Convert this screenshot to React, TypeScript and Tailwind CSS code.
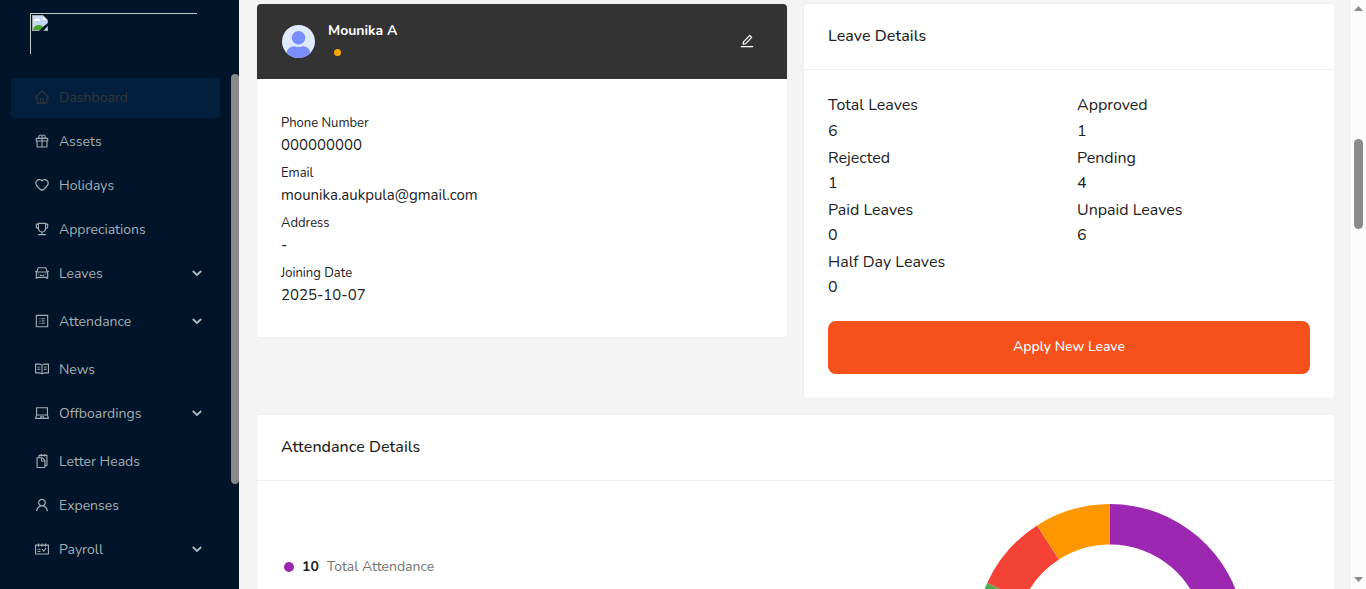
import type { ReactNode } from "react";
import {
  AiOutlineCar,
  AiOutlineEdit,
  AiOutlineGift,
  AiOutlineHeart,
  AiOutlineHome,
  AiOutlineLaptop,
  AiOutlineProfile,
  AiOutlineRead,
  AiOutlineSchedule,
  AiOutlineSnippets,
  AiOutlineTrophy,
  AiOutlineUser,
} from "react-icons/ai";

type MenuItem = {
  label: string;
  icon: ReactNode;
  active?: boolean;
  expandable?: boolean;
};

const menu: MenuItem[] = [
  { label: "Dashboard", icon: <AiOutlineHome />, active: true },
  { label: "Assets", icon: <AiOutlineGift /> },
  { label: "Holidays", icon: <AiOutlineHeart /> },
  { label: "Appreciations", icon: <AiOutlineTrophy /> },
  { label: "Leaves", icon: <AiOutlineCar />, expandable: true },
  { label: "Attendance", icon: <AiOutlineProfile />, expandable: true },
  { label: "News", icon: <AiOutlineRead /> },
  { label: "Offboardings", icon: <AiOutlineLaptop />, expandable: true },
  { label: "Letter Heads", icon: <AiOutlineSnippets /> },
  { label: "Expenses", icon: <AiOutlineUser /> },
  { label: "Payroll", icon: <AiOutlineSchedule />, expandable: true },
];

const contact = [
  { label: "Phone Number", value: "000000000" },
  { label: "Email", value: "mounika.aukpula@gmail.com" },
  { label: "Address", value: "-" },
  { label: "Joining Date", value: "2025-10-07" },
];

const leaves = [
  { label: "Total Leaves", value: "6" },
  { label: "Approved", value: "1" },
  { label: "Rejected", value: "1" },
  { label: "Pending", value: "4" },
  { label: "Paid Leaves", value: "0" },
  { label: "Unpaid Leaves", value: "6" },
  { label: "Half Day Leaves", value: "0" },
];

const slices = [
  { color: "#9c27b0", from: 0, to: 5 },
  { color: "#4caf50", from: 5, to: 9 },
  { color: "#f44336", from: 9, to: 10 },
  { color: "#ff9800", from: 10, to: 11 },
];

function BrokenLogo() {
  return (
    <div className="ml-[30px] mt-[13px] h-[41px] w-[167px] shrink-0 border-l border-t border-[#c4c6c8] pl-px pt-px">
      <svg width="16" height="16" viewBox="0 0 16 16">
        <path d="M0 0h11l5 5v11H0z" fill="#a9a9a9" />
        <path d="M1 1h10v4h4v10H1z" fill="#c4d7f5" />
        <path d="M2 6a1.500 1.500 0 0 1 1.500-2 2 2 0 0 1 3.500 0 1.500 1.500 0 0 1 1 2z" fill="#fff" />
        <path d="M1 15c0-3 3-5 6-5s5 2 6 5z" fill="#4ea82c" />
        <path d="M11 1l4 4h-4z" fill="#f4f4f4" />
        <path d="M16 8v3l-5 5H7l5-5z" fill="#001529" />
      </svg>
    </div>
  );
}

function Chevron() {
  return (
    <svg className="mb-0.5 ml-auto mr-[17px]" width="12" height="8" viewBox="0 0 12 8" fill="none">
      <path d="M1.800 2 6 5.900l4.200-3.900" stroke="#b3b9bf" strokeWidth="1.900" />
    </svg>
  );
}

function Sidebar() {
  return (
    <aside className="flex h-full w-[239px] shrink-0 flex-col bg-[#001529]">
      <BrokenLogo />
      <div className="flex min-h-0 grow pt-5">
        <nav className="mt-1 flex w-[231px] shrink-0 flex-col gap-1 pl-[11px] pr-[11px]">
          {menu.map((item) => (
            <div key={item.label} className={item.expandable ? "pb-1" : ""}>
              <div
                className={`flex h-10 items-center rounded pl-[23px] text-sm ${
                  item.active ? "bg-[#021f3d] text-[#333639]" : "text-[#a6adb4]"
                }`}
              >
                <span className="mb-0.5 mr-[9px] text-base">{item.icon}</span>
                <span className="whitespace-nowrap">{item.label}</span>
                {item.expandable && <Chevron />}
              </div>
            </div>
          ))}
        </nav>
        <div className="h-[410px] w-2 rounded bg-[#888]" />
      </div>
    </aside>
  );
}

function Avatar() {
  return (
    <svg width="33" height="33" viewBox="0 0 33 33">
      <defs>
        <clipPath id="avatar-disc">
          <circle cx="16.500" cy="16.500" r="16.500" />
        </clipPath>
      </defs>
      <g clipPath="url(#avatar-disc)">
        <rect width="33" height="33" fill="#e0eaff" />
        <circle cx="16.500" cy="12.800" r="6.800" fill="#7b8cff" />
        <path d="M4.500 33v-4c0-4 3-7.800 7.500-7.800 1.500 0 2.500.8 4.500.8s3-.8 4.500-.8c4.500 0 7.500 3.800 7.500 7.800v4z" fill="#7b8cff" />
      </g>
    </svg>
  );
}

function ProfileCard() {
  return (
    <section className="h-[334px] w-[532px] rounded border border-t-0 border-[#f0f0f0] bg-white">
      <header className="flex h-[75px] items-center rounded-t bg-[#333] pl-[25px] pr-8">
        <Avatar />
        <div className="ml-[13px] flex h-full flex-col pt-4">
          <h2 className="text-sm font-bold leading-[22px] text-white">Mounika A</h2>
          <span className="ml-[6px] mt-[7px] size-[7px] rounded-full bg-[#ffa500]" />
        </div>
        <AiOutlineEdit className="mb-0.5 ml-auto text-base text-white" />
      </header>
      <dl className="flex flex-col px-6 pt-[33px] text-[#212223]">
        {contact.map((row) => (
          <div key={row.label} className="flex h-[50px] flex-col">
            <dt className="text-[13px] leading-[22px]">{row.label}</dt>
            <dd className="text-[15px] leading-[22px]">{row.value}</dd>
          </div>
        ))}
      </dl>
    </section>
  );
}

function LeaveCard() {
  return (
    <section className="-mt-px flex h-[396px] w-[532px] flex-col rounded border border-[#f0f0f0] bg-white">
      <h2 className="flex h-[66px] items-center border-b border-[#f0f0f0] px-6 pb-0.5 text-base font-medium tracking-[0.05px] text-[#1f1f1f]">
        Leave Details
      </h2>
      <div className="flex flex-col px-6 pt-[23.700px]">
        <dl className="grid grid-cols-[249px_1fr] text-base text-[#212223]">
          {leaves.map((row, index) => (
            <div key={row.label} className="flex h-[52.200px] flex-col">
              <dt className={`leading-[25.200px] ${index < 2 ? "-mt-px pb-px" : ""}`}>{row.label}</dt>
              <dd className="leading-[25.200px]">{row.value}</dd>
            </div>
          ))}
        </dl>
        <button className="mt-[18.500px] h-[53px] w-[482px] rounded-lg bg-[#f6511d] text-sm font-medium text-white">
          Apply New Leave
        </button>
      </div>
    </section>
  );
}

function DonutChart() {
  const size = 270;
  const center = size / 2;
  const outer = 135;
  const inner = 94.5;
  const point = (radius: number, step: number) => {
    const angle = (step / 11) * Math.PI * 2;
    return `${center + radius * Math.sin(angle)} ${center - radius * Math.cos(angle)}`;
  };
  return (
    <svg className="shrink-0" width={size} height={size} viewBox={`0 0 ${size} ${size}`}>
      {slices.map(({ color, from, to }) => (
        <path
          key={color}
          fill={color}
          d={`M${point(outer, from)}A${outer} ${outer} 0 0 1 ${point(outer, to)}L${point(inner, to)}A${inner} ${inner} 0 0 0 ${point(inner, from)}Z`}
        />
      ))}
    </svg>
  );
}

function AttendanceCard() {
  return (
    <section className="h-[420px] w-[1079px] shrink-0 rounded border border-[#f0f0f0] bg-white">
      <h2 className="flex h-[66px] items-center border-b border-[#f0f0f0] px-6 pb-0.5 text-base font-medium tracking-[0.05px] text-[#1f1f1f]">
        Attendance Details
      </h2>
      <div className="flex items-start justify-between pl-[27px] pr-[89px] pt-[23px]">
        <div className="mt-[52px] flex h-[22px] items-center text-sm">
          <span className="size-[10px] rounded-full bg-[#9c27b0]" />
          <span className="ml-2 font-bold text-[#1f1f1f]">10</span>
          <span className="ml-2 text-[#737373]">Total Attendance</span>
        </div>
        <DonutChart />
      </div>
    </section>
  );
}

function PageScrollbar() {
  return (
    <div className="flex h-full w-[15px] shrink-0 flex-col items-center bg-[#fcfcfc]">
      <svg className="mt-[6px]" width="9" height="5" viewBox="0 0 9 5">
        <path d="M4.500 0 9 5H0z" fill="#8b8b8b" />
      </svg>
      <div className="mt-[128px] h-[90px] w-[9px] rounded-full bg-[#8b8b8b]" />
      <svg className="mb-[7px] mt-auto" width="9" height="5" viewBox="0 0 9 5">
        <path d="M0 0h9L4.500 5z" fill="#8b8b8b" />
      </svg>
    </div>
  );
}

export default function App() {
  return (
    <div className="flex h-[589px] w-[1366px] overflow-hidden bg-[#f4f4f4] font-['Nunito','Lato',sans-serif]">
      <Sidebar />
      <main className="flex min-w-0 grow flex-col gap-[15px] overflow-hidden pl-[17px] pt-1">
        <div className="flex items-start gap-[15px]">
          <ProfileCard />
          <LeaveCard />
        </div>
        <AttendanceCard />
      </main>
      <PageScrollbar />
    </div>
  );
}
